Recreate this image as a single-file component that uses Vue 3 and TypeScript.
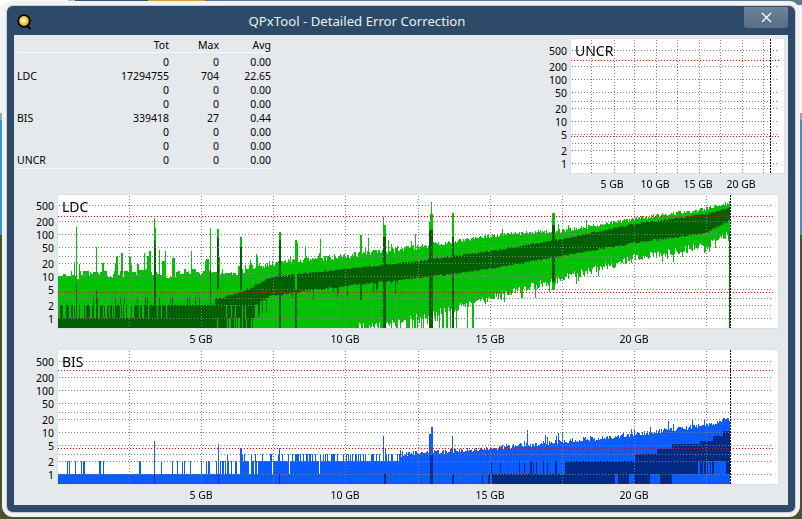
<script setup lang="ts">
import { onMounted, ref } from 'vue';

type Chart = {
    name: string;
    width: number;
    height: number;
    baseline: number;
    wide: boolean;
    grid: number[];
    endX: number;
    redRows: number[];
    xLabels: { text: string; x: number }[];
};

const stats = [
    { label: '', tot: '0', max: '0', avg: '0.00' },
    { label: 'LDC', tot: '17294755', max: '704', avg: '22.65' },
    { label: '', tot: '0', max: '0', avg: '0.00' },
    { label: '', tot: '0', max: '0', avg: '0.00' },
    { label: 'BIS', tot: '339418', max: '27', avg: '0.44' },
    { label: '', tot: '0', max: '0', avg: '0.00' },
    { label: '', tot: '0', max: '0', avg: '0.00' },
    { label: 'UNCR', tot: '0', max: '0', avg: '0.00' },
];

const wideGrid = [71, 143, 215, 287, 360, 432, 504, 576, 648];
const wideLabels = [
    { text: '5 GB', x: 143 },
    { text: '10 GB', x: 287 },
    { text: '15 GB', x: 432 },
    { text: '20 GB', x: 576 },
];

const charts: Chart[] = [
    {
        name: 'UNCR', width: 213, height: 134, baseline: 124, wide: false, endX: 199,
        grid: [20, 43, 63, 85, 106, 128, 149, 171, 192],
        redRows: [21, 97],
        xLabels: [
            { text: '5 GB', x: 41 },
            { text: '10 GB', x: 84 },
            { text: '15 GB', x: 127 },
            { text: '20 GB', x: 170 },
        ],
    },
    { name: 'LDC', width: 720, height: 133, baseline: 123, wide: true, endX: 672, grid: wideGrid, redRows: [21, 97], xLabels: wideLabels },
    { name: 'BIS', width: 720, height: 134, baseline: 124, wide: true, endX: 672, grid: wideGrid, redRows: [20, 98], xLabels: wideLabels },
];

const yLabels = [500, 200, 100, 50, 20, 10, 5, 2, 1];
const gridLevels = [500, 200, 100, 50, 30, 20, 10, 5, 3, 2, 1];

const levelY = (chart: Chart, value: number) => Math.round(chart.baseline - 42 * Math.log10(value));

const plots = ref<HTMLCanvasElement[]>([]);

// small seeded generator so the traces stay the same on every load
const makeRandom = (seed: number) => () => {
    seed = (seed + 0x6d2b79f5) | 0;
    let t = Math.imul(seed ^ (seed >>> 15), 1 | seed);
    t = (t + Math.imul(t ^ (t >>> 7), 61 | t)) ^ t;
    return ((t ^ (t >>> 14)) >>> 0) / 4294967296;
};

const interp = (table: number[][], x: number) => {
    for (let i = 1; i < table.length; i++) {
        if (x <= table[i][0]) {
            const [x0, y0] = table[i - 1];
            const [x1, y1] = table[i];
            return y0 + ((y1 - y0) * (x - x0)) / (x1 - x0);
        }
    }
    return table[table.length - 1][1];
};

// the LDC and BIS tables below are in page pixels, taken off the reference
const drawLdc = (ctx: CanvasRenderingContext2D) => {
    const rnd = makeRandom(11);
    const light = '#04c004';
    const dark = '#006000';
    const top0 = 195;
    const bottom = 328;
    const upper = [[58, 274], [225, 271], [270, 264], [345, 256], [418, 247], [490, 236], [530, 232], [562, 231], [634, 219], [706, 209], [730, 202]];
    const lower = [[345, 328], [400, 322], [440, 312], [490, 298], [530, 287], [562, 278], [634, 258], [706, 246], [730, 232]];
    const bandTop = [[215, 298], [240, 291], [255, 285], [270, 277], [345, 269], [418, 261], [490, 251], [562, 239], [634, 224], [706, 214], [730, 207]];
    const bandBottom = [[240, 305], [255, 305], [270, 296], [345, 286], [418, 278], [490, 269], [562, 256], [634, 243], [706, 233], [730, 220]];
    const rect = (color: string, x: number, y0: number, y1: number, w = 1) => {
        ctx.fillStyle = color;
        ctx.fillRect(x - 58, y0 - top0, w, y1 - y0);
    };

    let held = 276;
    for (let x = 58; x < 730; x++) {
        let top = interp(upper, x);
        if (x < 250) {
            // blocky, two or three pixel wide columns on the left part
            if (rnd() < 0.5) {
                held = top + (rnd() - 0.35) * 9;
                if (rnd() < 0.2) held = 250 + rnd() * 16;
            }
            top = held;
        } else if (x < 440) {
            top += (rnd() - 0.5) * 6;
            if (rnd() < 0.08) top -= 5 + rnd() * 12;
        } else {
            top += (rnd() - 0.5) * 4;
            if (rnd() < 0.05) top -= 3 + rnd() * 4;
        }
        let end = bottom;
        if (x >= 345) {
            end = interp(lower, x) + (rnd() - 0.5) * 8;
            if (x < 480 && rnd() < 0.5 - (x - 345) * 0.0028) end = bottom;
            else if (rnd() < 0.07) end += 4 + rnd() * 6;
            end = Math.min(end, bottom);
        }
        rect(light, x, Math.round(top), Math.round(end));

        if (x < 167) {
            rect(dark, x, 318, bottom);
            if (rnd() < (x > 142 && x < 155 ? 0.9 : 0.5)) rect(dark, x, 305, 318);
            if (rnd() < 0.1) rect(dark, x, 298, 305);
        } else if (x < 215) {
            rect(dark, x, 305, bottom);
            if (rnd() < 0.12) rect(dark, x, 298, 305);
        } else if (x < 255) {
            rect(dark, x, Math.round(interp(bandTop, x) + rnd() * 2), 305);
            if (rnd() < 0.9) rect(dark, x, 305, 318);
            if (rnd() < 0.6 && x < 253) rect(dark, x, 318, bottom);
        } else {
            const a = interp(bandTop, x) + (rnd() - 0.5) * 2;
            const b = interp(bandBottom, x) + (rnd() - 0.5) * 2 + (x < 400 && rnd() < 0.12 ? rnd() * 14 : 0);
            rect(dark, x, Math.round(a), Math.round(b));
        }
    }

    // [x, light top, width, dark top, dark bottom]
    const spikes = [
        [76, 227, 1, 283, 305], [96, 247, 1, 290, 305], [154, 218, 1, 240, 305], [155, 228, 1, 245, 305], [210, 228, 1, 270, 305],
        [217, 229, 2, 238, 290], [240, 237, 2, 247, 290], [279, 232, 2, 240, bottom], [295, 240, 2, 290, bottom], [360, 235, 2, 268, 300],
        [383, 217, 1, 237, bottom], [384, 225, 2, 237, bottom], [431, 202, 1, 230, bottom], [430, 214, 3, 230, bottom], [429, 222, 4, 230, bottom],
        [452, 213, 2, 237, bottom], [552, 213, 3, 225, 282],
    ];
    for (const [x, top, w] of spikes) {
        rect(light, x, top, 290, w);
    }
    for (const [x, , w, darkTop, darkEnd] of spikes) {
        rect(dark, x, darkTop, darkEnd, w);
    }
    rect('#007800', 729, 232, bottom, 1);
};

const drawBis = (ctx: CanvasRenderingContext2D) => {
    const rnd = makeRandom(29);
    const light = '#0a5cff';
    const dark = '#002a85';
    const top0 = 350;
    const bottom = 484;
    const upper = [[400, 454], [490, 448], [530, 444], [562, 441], [634, 434], [706, 424], [730, 418]];
    const darkSteps = [[635, 454], [657, 449], [672, 444], [700, 441], [713, 436], [723, 431]];
    const rect = (color: string, x: number, y0: number, y1: number, w = 1) => {
        ctx.fillStyle = color;
        ctx.fillRect(x - 58, y0 - top0, w, y1 - y0);
    };

    for (let x = 58; x < 730; x++) {
        let top = 474;
        if (x < 160) {
            if (rnd() < 0.11) top = 461;
        } else if (x < 215) {
            if (rnd() < 0.22) top = 461;
        } else if (x < 240) {
            if (rnd() < 0.55) top = rnd() < 0.2 ? 454 : 461;
        } else if (x < 273) {
            if (rnd() < 0.85) top = rnd() < 0.25 ? 454 : 461;
        } else if (x < 400) {
            top = rnd() < 0.4 ? 454 : 461;
            if (rnd() < 0.03) top = 448;
            if (x === 289 || x === 319) top = 474;
        } else {
            top = Math.round(interp(upper, x) + (rnd() - 0.4) * 5);
            if (rnd() < 0.05) top -= 3 + Math.round(rnd() * 5);
        }
        rect(light, x, top, bottom);

        const step = darkSteps.filter((s) => s[0] <= x).pop();
        if (step) rect(dark, x, step[1], 461);
        if ((x >= 490 && x < 568 && rnd() < 0.22) || (x >= 568 && x < 698) || (x >= 698 && x < 715 && rnd() < 0.5) || x >= 726) {
            rect(dark, x, 461, 474);
        }
        const gap = (x >= 615 && x < 618) || (x >= 629 && x < 634) || (x >= 650 && x < 660);
        if (x >= 492 && x < 672 && !gap) rect(dark, x, 474, bottom);
    }

    const spikes = [[154, 441, 1], [218, 444, 1], [240, 448, 2], [383, 436, 1], [431, 427, 2], [429, 434, 2], [452, 436, 1], [527, 430, 1], [558, 433, 1]];
    for (const [x, top, w] of spikes) rect(light, x, top, 474, w);
    for (const [x, w] of [[154, 1], [218, 1], [279, 1], [384, 2], [430, 3], [452, 2], [482, 1], [488, 2]]) {
        rect(dark, x, 474, bottom, w);
    }
    rect(dark, 430, 455, 474, 3);
};

const drawGrid = (ctx: CanvasRenderingContext2D, chart: Chart) => {
    ctx.fillStyle = '#808080';
    for (const x of chart.grid) {
        for (let y = 1; y < chart.height; y += 3) ctx.fillRect(x, y, 1, 1);
    }
    for (const level of gridLevels) {
        const y = levelY(chart, level);
        for (let x = 1; x < chart.width - 5; x += 3) ctx.fillRect(x, y, 1, 1);
    }
    ctx.fillStyle = '#ff0000';
    for (const y of chart.redRows) {
        for (let x = 0; x < chart.width - 5; x += 3) ctx.fillRect(x, y, 1, 1);
    }
    ctx.fillStyle = '#000000';
    for (let y = 0; y < chart.height; y += 3) ctx.fillRect(chart.endX, y, 1, 2);
};

onMounted(() => {
    plots.value.forEach((canvas, i) => {
        const ctx = canvas.getContext('2d');
        if (!ctx) return;
        const chart = charts[i];
        if (chart.name === 'LDC') drawLdc(ctx);
        if (chart.name === 'BIS') drawBis(ctx);
        drawGrid(ctx, chart);
    });
});
</script>

<template>
    <div class="desktop">
        <div class="window">
            <header class="titlebar">
                <svg class="app-icon" width="15" height="16" viewBox="0 0 15 16">
                    <defs>
                        <radialGradient id="disc" cx="0.45" cy="0.45" r="0.6">
                            <stop offset="0" stop-color="#fff6c8" />
                            <stop offset="0.55" stop-color="#f6c445" />
                            <stop offset="1" stop-color="#d88a1a" />
                        </radialGradient>
                    </defs>
                    <path d="M10 12l3.5 3" stroke="#000" stroke-width="2" />
                    <circle cx="7" cy="7" r="5.8" fill="url(#disc)" stroke="#000" stroke-width="1.8" />
                    <circle cx="7" cy="7" r="1" fill="#fff" />
                </svg>
                <span class="title">QPxTool - Detailed Error Correction</span>
                <button class="close" type="button" aria-label="Close">
                    <svg width="11" height="11" viewBox="0 0 11 11">
                        <path d="M1 1l9 9M10 1l-9 9" stroke="#fff" stroke-width="1.3" fill="none" />
                    </svg>
                </button>
            </header>

            <main class="panel">
                <div class="stats">
                    <div class="stats-row stats-head">
                        <span></span><span>Tot</span><span>Max</span><span>Avg</span>
                    </div>
                    <div class="stats-body">
                        <div v-for="(row, i) in stats" :key="i" class="stats-row">
                            <span class="stats-label">{{ row.label }}</span>
                            <span>{{ row.tot }}</span>
                            <span>{{ row.max }}</span>
                            <span>{{ row.avg }}</span>
                        </div>
                    </div>
                </div>

                <section v-for="chart in charts" :key="chart.name" class="chart" :class="{ 'chart-wide': chart.wide }">
                    <div class="y-axis">
                        <span
                            v-for="value in yLabels"
                            :key="value"
                            class="y-label"
                            :style="{ top: levelY(chart, value) + 1 + 'px' }"
                        >{{ value }}</span>
                    </div>
                    <div class="plot">
                        <canvas ref="plots" :width="chart.width" :height="chart.height"></canvas>
                        <span class="plot-name">{{ chart.name }}</span>
                    </div>
                    <div class="x-axis">
                        <span
                            v-for="tick in chart.xLabels"
                            :key="tick.text"
                            class="x-label"
                            :style="{ left: tick.x + 'px' }"
                        >{{ tick.text }}</span>
                    </div>
                </section>
            </main>
        </div>
    </div>
</template>

<style>
html,
body {
    margin: 0;
    overflow: hidden;
}
</style>

<style scoped>
.desktop {
    position: relative;
    width: 802px;
    height: 519px;
    overflow: hidden;
    background:
        linear-gradient(to right, #ffffff 0 68px, #b5bcc4 68px 75px, #34536e 75px 148px, #c9a13a 148px 205px, #5a7a93 205px) top / 100% 5px no-repeat,
        linear-gradient(to bottom, #f4f5f6 0 113px, #9aa5ae 113px 120px, #3f93c4 120px 235px, #46552c 235px);
}

.window {
    position: absolute;
    left: 7px;
    top: 6px;
    width: 788px;
    height: 506px;
    display: flex;
    flex-direction: column;
    box-sizing: border-box;
    padding: 0 7px 7px;
    background: #2d4a69;
    border-radius: 6px;
    box-shadow: 0 0 0 1px #c9ced3, 0 0 0 5px #f1f2f3;
    font-family: "Noto Sans", sans-serif;
    color: #000;
}

.titlebar {
    position: relative;
    flex: none;
    height: 29px;
    display: flex;
    align-items: center;
    justify-content: center;
}

.app-icon {
    position: absolute;
    left: 3px;
    top: 8px;
}

.title {
    margin: 1px 88px 0 0;
    color: #e9eff5;
    font-size: 13.2px;
}

.close {
    position: absolute;
    right: 0;
    top: 1px;
    width: 44px;
    height: 21px;
    padding: 0;
    display: flex;
    align-items: center;
    justify-content: center;
    border: 0;
    border-radius: 0 0 3px 3px;
    background: linear-gradient(#6f8499, #62788f 50%, #576e86);
}

.panel {
    flex: 1;
    display: grid;
    grid-template-columns: 1fr auto;
    align-content: start;
    box-sizing: border-box;
    padding: 4px 4px 0 0;
    background: #e6e9ec;
}

.stats {
    width: 254px;
    margin: -1px 0 0 3px;
    font-size: 10.5px;
}

.stats-row {
    display: grid;
    grid-template-columns: 1fr 60px 50px 52px;
    height: 14px;
    line-height: 14px;
    text-align: right;
}

.stats-head {
    border-bottom: 1px solid #f6f7f8;
}

.stats-body {
    margin-top: 2px;
    padding-bottom: 1px;
    border-bottom: 1px solid #f6f7f8;
}

.stats-label {
    text-align: left;
}

.chart {
    display: grid;
    grid-template-columns: 44px auto;
    grid-template-rows: auto 22px;
    font-size: 10.5px;
}

.chart-wide {
    grid-column: 1 / -1;
    justify-self: start;
}

.chart-wide:last-child {
    grid-template-rows: auto 21px;
}

.y-axis {
    position: relative;
}

.y-label {
    position: absolute;
    right: 4px;
    line-height: 1;
    transform: translateY(-50%);
}

.plot {
    position: relative;
    background: #fff;
    outline: 1px solid #dde1e4;
}

.plot canvas {
    display: block;
}

.plot-name {
    position: absolute;
    left: 4px;
    top: 3px;
    font-size: 14px;
    line-height: 18px;
}

.x-axis {
    position: relative;
    grid-column: 2;
}

.x-label {
    position: absolute;
    top: 0;
    line-height: 22px;
    white-space: nowrap;
    transform: translateX(-50%);
}
</style>
